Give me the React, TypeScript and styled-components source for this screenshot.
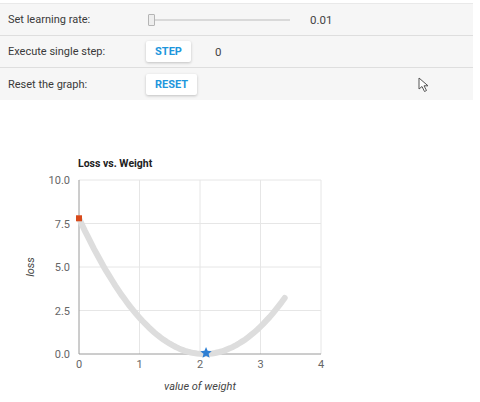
import styled, { createGlobalStyle } from "styled-components";

const GlobalStyle = createGlobalStyle`
  body {
    margin: 0;
    background: #ffffff;
    font-family: Roboto, "Liberation Sans", sans-serif;
  }
`;

const Page = styled.div`
  width: 480px;
  height: 402px;
  overflow: hidden;
  padding-top: 3px;
  box-sizing: border-box;
`;

const Panel = styled.div`
  position: relative;
  width: 473px;
  background: #f6f6f6;
  border-top: 1px solid #e9e9e9;
  display: flex;
  flex-direction: column;
`;

const Row = styled.div<{ $last?: boolean }>`
  display: flex;
  align-items: center;
  height: ${(p) => (p.$last ? 32 : 31)}px;
  border-bottom: ${(p) => (p.$last ? "none" : "1px solid #dedede")};
`;

const Label = styled.div`
  width: 138px;
  padding-left: 8px;
  font-size: 11px;
  color: #3a3a3a;
`;

const Track = styled.div`
  position: relative;
  width: 142px;
  height: 2px;
  margin-left: 2px;
  background: #d9d9d9;
`;

const Thumb = styled.div`
  position: absolute;
  left: 0;
  top: -5px;
  width: 5px;
  height: 10px;
  background: #eeeeee;
  border: 1px solid #b5b5b5;
  border-radius: 1px;
`;

const Value = styled.div<{ $gap: number }>`
  margin-left: ${(p) => p.$gap}px;
  font-size: 11.5px;
  color: #444;
`;

const Button = styled.button<{ $w: number }>`
  width: ${(p) => p.$w}px;
  height: 21px;
  border: none;
  border-radius: 2px;
  background: #ffffff;
  box-shadow: 0 1px 3px rgba(0, 0, 0, 0.22);
  color: #1e96dc;
  font-family: Roboto, "Liberation Sans", sans-serif;
  font-size: 11px;
  font-weight: 700;
  padding: 0;
`;

const Cursor = styled.svg`
  position: absolute;
  left: 418px;
  top: 73px;
`;

const Chart = styled.svg`
  display: block;
`;

const X0 = 79;
const SX = 60.5;
const Y0 = 254;
const SY = 17.4;
const px = (w: number) => X0 + w * SX;
const py = (l: number) => Y0 - l * SY;

const M = 2.07;
const A = 7.8 / (M * M);
const curve = Array.from({ length: 69 }, (_, i) => {
  const w = (i * 3.4) / 68;
  const l = A * (w - M) * (w - M);
  return `${i === 0 ? "M" : "L"}${px(w).toFixed(1)},${py(l).toFixed(1)}`;
}).join(" ");

const starPath = (cx: number, cy: number, r: number) => {
  const pts: string[] = [];
  for (let i = 0; i < 10; i++) {
    const rad = i % 2 === 0 ? r : r * 0.45;
    const a = -Math.PI / 2 + (i * Math.PI) / 5;
    pts.push(`${(cx + rad * Math.cos(a)).toFixed(2)},${(cy + rad * Math.sin(a)).toFixed(2)}`);
  }
  return pts.join(" ");
};

const font = "Roboto, 'Liberation Sans', sans-serif";

export default function App() {
  const yTicks = [0, 2.5, 5, 7.5, 10];
  const xTicks = [0, 1, 2, 3, 4];
  return (
    <>
      <GlobalStyle />
      <Page>
        <Panel>
          <Row>
            <Label>Set learning rate:</Label>
            <Track>
              <Thumb />
            </Track>
            <Value $gap={20}>0.01</Value>
          </Row>
          <Row>
            <Label>Execute single step:</Label>
            <Button $w={45}>STEP</Button>
            <Value $gap={24}>0</Value>
          </Row>
          <Row $last>
            <Label>Reset the graph:</Label>
            <Button $w={51}>RESET</Button>
          </Row>
          <Cursor width="12" height="16" viewBox="0 0 12 16">
            <path d="M1 1 L1 12 L4 9.5 L6.5 14.5 L8.5 13.5 L6 8.8 L10 8.8 Z" fill="#fff" stroke="#555" strokeWidth="1" />
          </Cursor>
        </Panel>
        <Chart width="480" height="302" viewBox="0 0 480 302">
          <text x="78" y="67" fontSize="10.5" fontWeight="700" fill="#222" fontFamily={font}>
            Loss vs. Weight
          </text>
          {yTicks.slice(1).map((t) => (
            <line key={`h${t}`} x1={X0} x2={px(4)} y1={py(t)} y2={py(t)} stroke="#e6e6e6" strokeWidth="1" />
          ))}
          {xTicks.slice(1).map((t) => (
            <line key={`v${t}`} x1={px(t)} x2={px(t)} y1={py(10)} y2={Y0} stroke="#e6e6e6" strokeWidth="1" />
          ))}
          <line x1={X0} x2={X0} y1={py(10)} y2={Y0} stroke="#9a9a9a" strokeWidth="1" />
          <line x1={X0} x2={px(4)} y1={Y0} y2={Y0} stroke="#9a9a9a" strokeWidth="1" />
          {yTicks.map((t) => (
            <text key={`yl${t}`} x="70" y={py(t) + 4} fontSize="11" fill="#666" textAnchor="end" fontFamily={font}>
              {t.toFixed(1)}
            </text>
          ))}
          {xTicks.map((t) => (
            <text key={`xl${t}`} x={px(t)} y={Y0 + 14} fontSize="11" fill="#666" textAnchor="middle" fontFamily={font}>
              {t}
            </text>
          ))}
          <text x="200" y="290" fontSize="11" fontStyle="italic" fill="#444" textAnchor="middle" fontFamily={font}>
            value of weight
          </text>
          <text x="0" y="0" fontSize="11" fontStyle="italic" fill="#444" textAnchor="middle" fontFamily={font} transform={`translate(34 ${py(5)}) rotate(-90)`}>
            loss
          </text>
          <path d={curve} fill="none" stroke="#dddddd" strokeWidth="6" strokeLinecap="round" strokeLinejoin="round" />
          <rect x={X0 - 3} y={py(7.8) - 3} width="6" height="6" fill="#d84a1b" />
          <polygon points={starPath(px(2.1), Y0 - 1, 6)} fill="#2f7fd3" />
        </Chart>
      </Page>
    </>
  );
}
